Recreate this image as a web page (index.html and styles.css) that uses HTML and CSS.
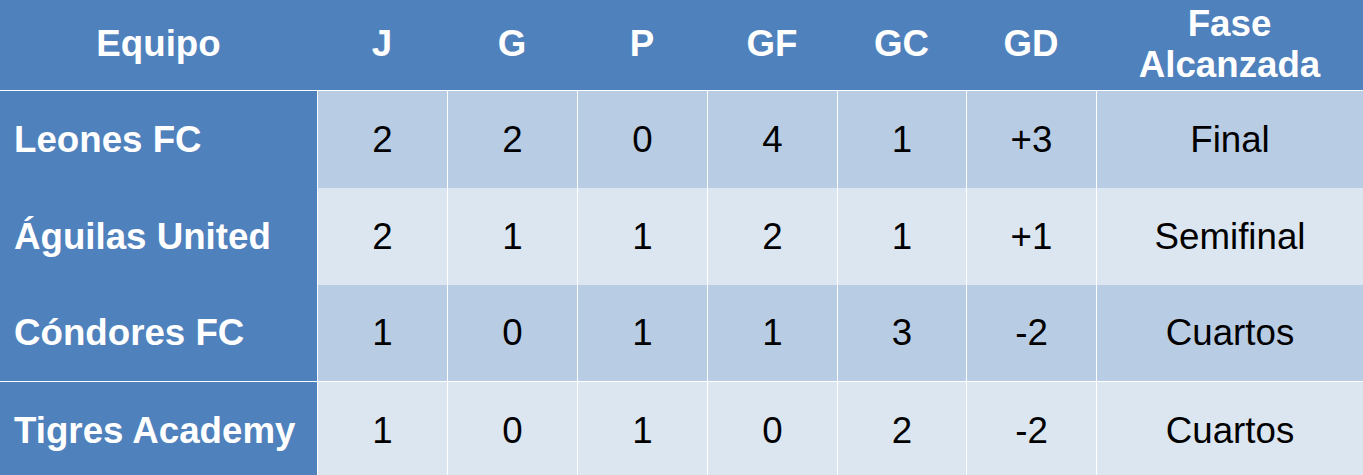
FILE: index.html
```html
<!DOCTYPE html>
<html lang="es">
<head>
<meta charset="utf-8">
<title>Tabla</title>
<link rel="stylesheet" href="styles.css">
</head>
<body>
<div class="table">
  <div class="th team-head">Equipo</div>
  <div class="th">J</div>
  <div class="th">G</div>
  <div class="th">P</div>
  <div class="th">GF</div>
  <div class="th">GC</div>
  <div class="th">GD</div>
  <div class="th">Fase<br>Alcanzada</div>

  <div class="team">Leones FC</div>
  <div class="td odd">2</div>
  <div class="td odd">2</div>
  <div class="td odd">0</div>
  <div class="td odd">4</div>
  <div class="td odd">1</div>
  <div class="td odd">+3</div>
  <div class="td odd">Final</div>

  <div class="team">Águilas United</div>
  <div class="td even">2</div>
  <div class="td even">1</div>
  <div class="td even">1</div>
  <div class="td even">2</div>
  <div class="td even">1</div>
  <div class="td even">+1</div>
  <div class="td even">Semifinal</div>

  <div class="team sep">Cóndores FC</div>
  <div class="td odd sep">1</div>
  <div class="td odd sep">0</div>
  <div class="td odd sep">1</div>
  <div class="td odd sep">1</div>
  <div class="td odd sep">3</div>
  <div class="td odd sep">-2</div>
  <div class="td odd sep">Cuartos</div>

  <div class="team">Tigres Academy</div>
  <div class="td even">1</div>
  <div class="td even">0</div>
  <div class="td even">1</div>
  <div class="td even">0</div>
  <div class="td even">2</div>
  <div class="td even">-2</div>
  <div class="td even">Cuartos</div>
</div>
</body>
</html>
```

FILE: styles.css
```css
html, body {
  margin: 0;
  padding: 0;
  background: #ffffff;
  overflow: hidden;
}

.table {
  display: grid;
  grid-template-columns: 317px 130px 130px 130px 130px 129px 130px 267px;
  grid-template-rows: 91px 97px 97px 97px 97px;
  font-family: "Liberation Sans", Arial, sans-serif;
  font-size: 36.7px;
}

.table > div {
  box-sizing: border-box;
  display: flex;
  align-items: center;
}

.th {
  background: #4f81bd;
  color: #ffffff;
  font-weight: bold;
  justify-content: center;
  text-align: center;
  line-height: 41px;
  border-bottom: 1px solid #ffffff;
  padding-bottom: 3px;
}

.team {
  background: #4f81bd;
  color: #ffffff;
  font-weight: bold;
  padding-left: 14px;
}

.td {
  color: #000000;
  justify-content: center;
  border-left: 1px solid #ffffff;
}

.odd {
  background: #b8cce4;
}

.even {
  background: #dce6f1;
}

.sep {
  border-bottom: 1px solid #ffffff;
}
```
